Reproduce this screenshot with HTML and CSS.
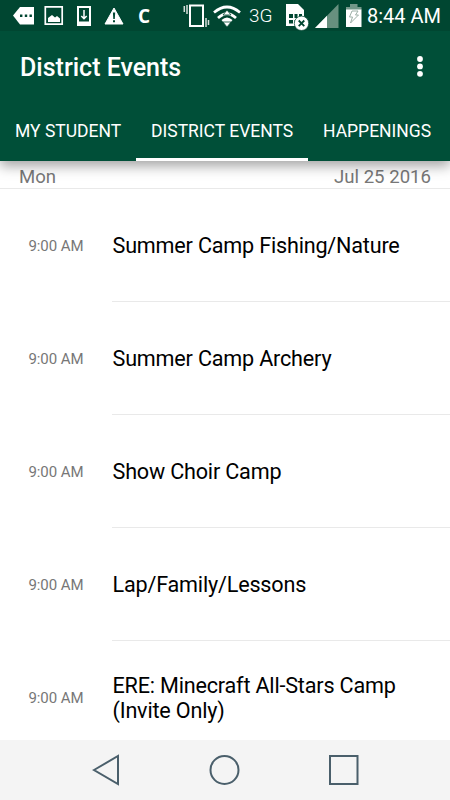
FILE: index.html
```html
<!DOCTYPE html>
<html lang="en">
<head>
<meta charset="utf-8">
<title>District Events</title>
<link rel="stylesheet" href="styles.css">
</head>
<body>
<div class="screen">
  <header class="top">
    <div class="status">
      <svg width="128" height="31" viewBox="0 0 128 31">
        <path fill="#fff" d="M13 15.500L20 7h14v17.500H20z"/>
        <path fill="#004631" d="M20 14.500h2.400v2.400H20zM24.800 14.500h2.400v2.400h-2.400zM29.500 14.500h2.400v2.400h-2.400z"/>
        <path fill="none" stroke="#fff" stroke-width="1.700" d="M45.300 6.900h16.900v17.300H45.300z"/>
        <path fill="#fff" d="M48 22v-4l4-3 3 2.500 2-1.500 3 2.500V22z"/>
        <path fill="#fff" fill-rule="evenodd" d="M77 6h14v20H77zM79 8v13.500h10V8z"/>
        <path fill="none" stroke="#fff" stroke-width="1.500" d="M84 10v8.500M81.300 16l2.700 2.700 2.700-2.700"/>
        <path fill="#fff" stroke="#fff" stroke-linejoin="round" d="M114 8l9 16h-18z"/>
        <path fill="#004631" d="M112.900 12.500h2.300l-.4 6.500h-1.500zM113 20.300h2v2h-2z"/>
      </svg>
      <span class="carrier">C</span>
      <svg class="radio" width="64" height="31" viewBox="180 0 64 31">
        <path fill="none" stroke="#fff" stroke-width="2" d="M190 5.500h13V26h-13z"/>
        <path fill="none" stroke="#d7e0dc" stroke-width="1.500" d="M187 5v9M184.300 6v6M206 18v9M208.500 20v5"/>
        <g fill="none" stroke="#fff" stroke-width="2.700"><path d="M214 12.500q13-11 26 0M218 18q9-8.500 18 0"/></g>
        <path fill="#fff" d="M221.500 20q5.500-5 11 0L227 27z"/>
        <path fill="#fff" stroke="#004631" stroke-width=".8" d="M227 10l4 5h-8zM227 27l-4-5h8z"/>
      </svg>
      <span class="network">3G</span>
      <svg class="signal" width="80" height="31" viewBox="283 0 80 31">
        <path fill="#fff" d="M286 4h12l6 6v16h-18z"/>
        <path fill="#004631" d="M289 14h4v4h-4zM294.500 14h3v4h-3zM299 14h3v4h-3zM289 20h4v3.500h-4zM294.500 20h3v3.500h-3z"/>
        <circle cx="301.500" cy="23.300" r="7.200" fill="#fff" stroke="#004631" stroke-width=".7"/>
        <path fill="none" stroke="#004631" stroke-width="1.800" d="M298.700 20.500l5.600 5.600m0-5.600l-5.600 5.600"/>
        <path fill="#67907f" d="M315 28L338.500 4v24z"/>
        <path fill="#fff" d="M315 28l12-12.200V28z"/>
        <path fill="#739688" d="M350 4h7.500v3h4v3H346V7h4z"/>
        <path fill="#fff" d="M346 9.500h15.500V27H346z"/>
        <path fill="none" stroke="#9cafa7" stroke-width="1" d="M352 11h6l-2.500 4h3l-8 8 2-6h-3z"/>
      </svg>
      <span class="clock">8:44 AM</span>
    </div>
    <div class="appbar">
      <h1>District Events</h1>
      <svg width="8" height="24" viewBox="0 0 8 24" fill="#fff"><circle cx="4" cy="4" r="2.900"/><circle cx="4" cy="11.400" r="2.900"/><circle cx="4" cy="18.800" r="2.900"/></svg>
    </div>
    <nav class="tabs">
      <span class="tab first">MY STUDENT</span>
      <span class="tab active">DISTRICT EVENTS</span>
      <span class="tab last">HAPPENINGS</span>
    </nav>
  </header>
  <div class="date"><span>Mon</span><span>Jul 25 2016</span></div>
  <main class="events">
    <div class="event"><span class="time">9:00 AM</span><div class="name">Summer Camp Fishing/Nature</div></div>
    <div class="event"><span class="time">9:00 AM</span><div class="name">Summer Camp Archery</div></div>
    <div class="event"><span class="time">9:00 AM</span><div class="name">Show Choir Camp</div></div>
    <div class="event"><span class="time">9:00 AM</span><div class="name">Lap/Family/Lessons</div></div>
    <div class="event"><span class="time">9:00 AM</span><div class="name">ERE: Minecraft All-Stars Camp<br>(Invite Only)</div></div>
  </main>
  <footer class="navbar">
    <svg width="450" height="60" viewBox="0 0 450 60" fill="none" stroke="#4a5f6b" stroke-width="2">
      <path d="M94 30l24-14v28z"/>
      <circle cx="224.500" cy="30" r="14"/>
      <path d="M330 16h27.500v28H330z"/>
    </svg>
  </footer>
</div>
</body>
</html>
```

FILE: styles.css
```css
* { box-sizing: border-box; }
body {
  margin: 0;
  font-family: Roboto, "Liberation Sans", sans-serif;
}
svg { display: block; flex: none; }
.screen {
  width: 450px;
  height: 800px;
  display: flex;
  flex-direction: column;
  overflow: hidden;
  background: #fff;
}
.top {
  flex: none;
  height: 161px;
  color: #fff;
  background: #004f38;
  position: relative;
  box-shadow: 0 5px 12px rgba(0, 0, 0, .36);
}
.status {
  height: 31px;
  display: flex;
  align-items: center;
  background: #004631;
  white-space: nowrap;
}
.carrier {
  width: 14px;
  margin-left: 10px;
  padding-top: 1px;
  font: 700 19px/31px "Open Sans", sans-serif;
}
.radio { margin-left: 28px; }
.network {
  width: 26px;
  margin-left: 5px;
  font-size: 19px;
  line-height: 31px;
  font-weight: 300;
}
.signal { margin-left: 8px; }
.clock {
  margin-left: 4px;
  padding-top: 1px;
  font-size: 20px;
  line-height: 32px;
}
.appbar {
  height: 72px;
  padding: 0 26px 0 20px;
  display: flex;
  align-items: center;
  justify-content: space-between;
}
h1 {
  margin: 0;
  padding-top: 2px;
  font-size: 25px;
  font-weight: 500;
  line-height: 30px;
}
.tabs {
  height: 58px;
  display: flex;
}
.tab {
  font-size: 17.5px;
  line-height: 56px;
  white-space: nowrap;
}
.first { width: 136px; padding-left: 15px; }
.active {
  width: 172px;
  padding-left: 15px;
  border-bottom: 3px solid #fff;
}
.last { padding-left: 15px; }
.date {
  flex: none;
  height: 28px;
  padding: 2px 19px 0 19px;
  display: flex;
  justify-content: space-between;
  font-size: 18.6px;
  line-height: 28px;
  color: #777;
  border-bottom: 1px solid #e9e9e9;
}
.events {
  flex: 1;
  min-height: 0;
  overflow: hidden;
}
.event {
  height: 113px;
  display: flex;
  align-items: center;
}
.time {
  width: 112px;
  flex: none;
  text-align: center;
  font-size: 15px;
  letter-spacing: -.05px;
  color: #777;
}
.name {
  flex: 1;
  height: 100%;
  display: flex;
  flex-direction: column;
  justify-content: center;
  padding: 3px 0 0 .5px;
  border-bottom: 1px solid #e9e9e9;
  font-size: 21.6px;
  letter-spacing: -.19px;
  line-height: 24.5px;
  color: #000;
}
.navbar {
  flex: none;
  height: 60px;
  background: #f4f4f4;
}
```
